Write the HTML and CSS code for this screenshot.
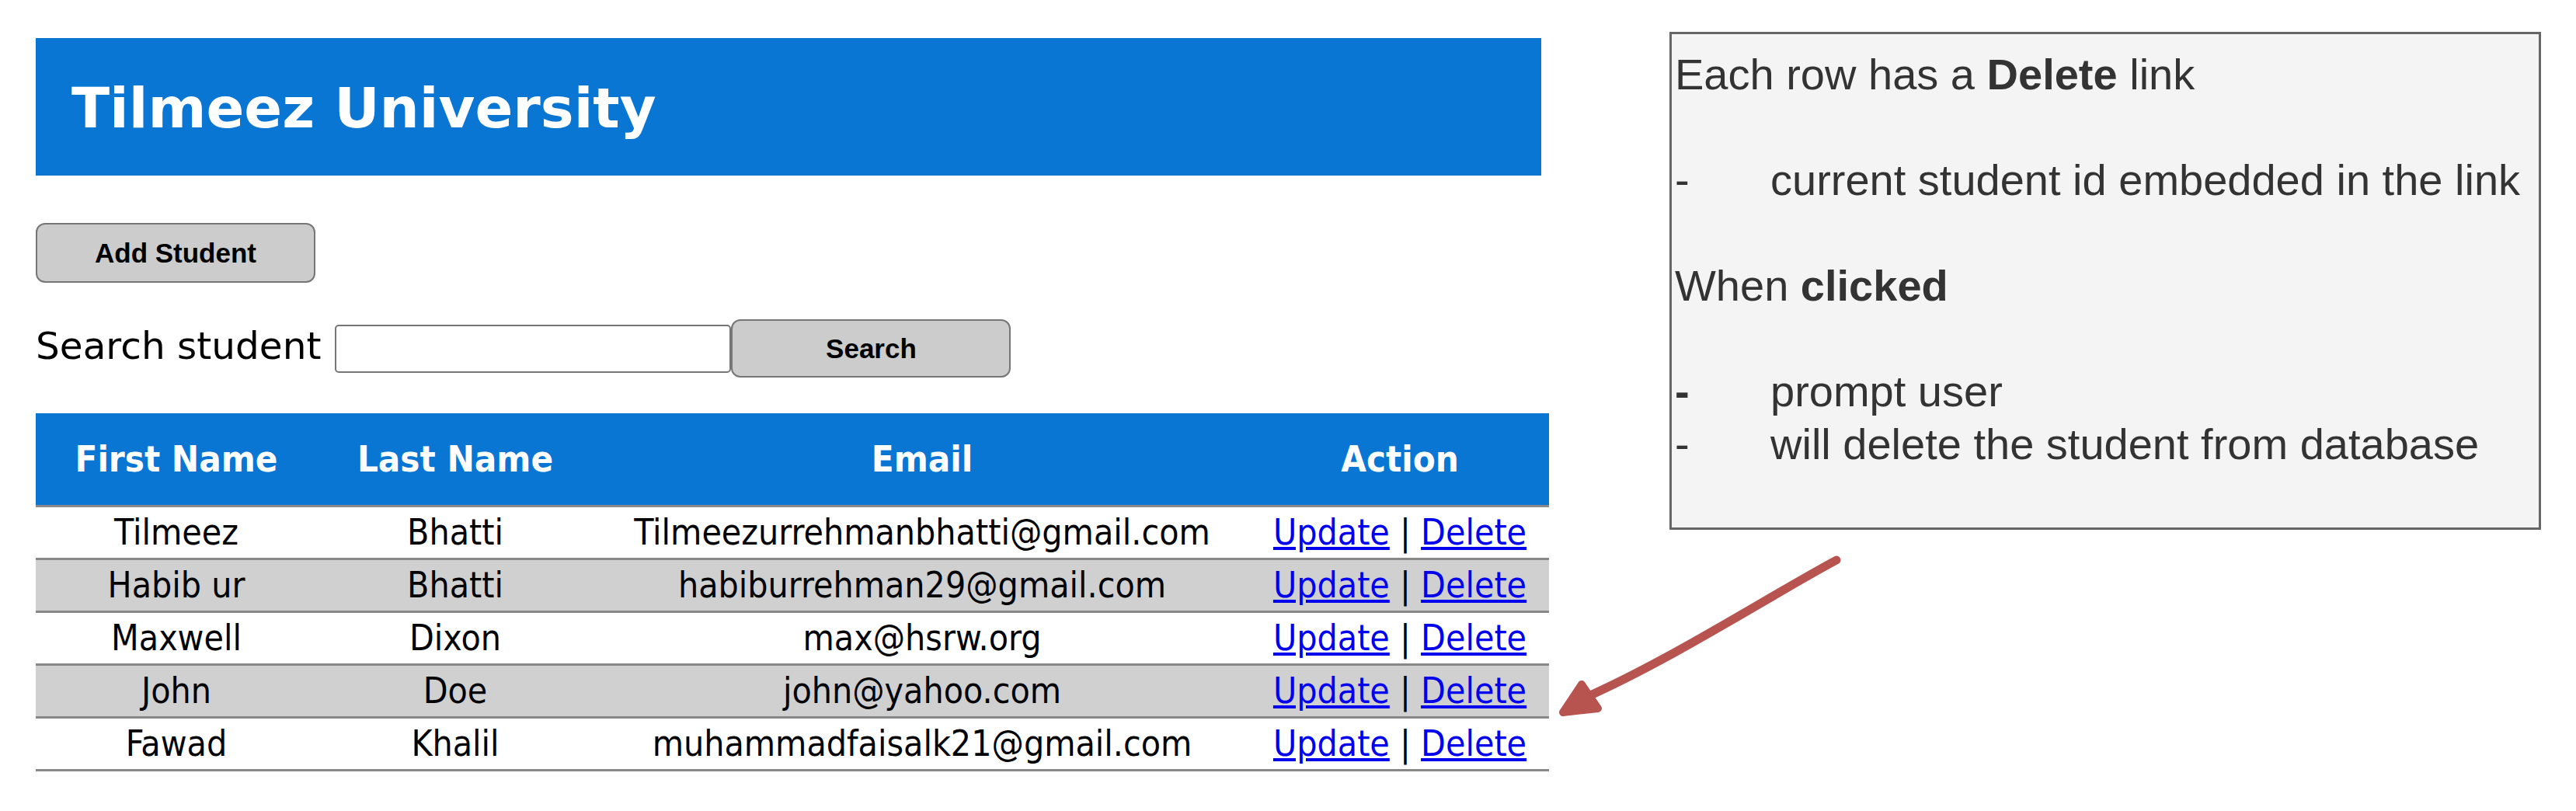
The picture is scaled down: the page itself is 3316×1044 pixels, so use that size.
FILE: index.html
```html
<!DOCTYPE html>
<html lang="en">
<head>
<meta charset="utf-8">
<title>Tilmeez University</title>
<link rel="stylesheet" href="styles.css">
</head>
<body>
<div class="page">
  <main class="main">
    <header class="banner"><h1 class="title">Tilmeez University</h1></header>
    <button class="btn btn-add" type="button">Add Student</button>
    <form class="search-row">
      <label class="search-label" for="q">Search student</label>
      <input class="search-input" id="q" type="text">
      <button class="btn btn-search" type="button">Search</button>
    </form>
    <table class="students">
      <colgroup>
        <col class="c1"><col class="c2"><col class="c3"><col class="c4">
      </colgroup>
      <thead>
        <tr><th>First Name</th><th>Last Name</th><th>Email</th><th>Action</th></tr>
      </thead>
      <tbody>
        <tr><td>Tilmeez</td><td>Bhatti</td><td>Tilmeezurrehmanbhatti@gmail.com</td><td><a href="#">Update</a> | <a href="#">Delete</a></td></tr>
        <tr><td>Habib ur</td><td>Bhatti</td><td>habiburrehman29@gmail.com</td><td><a href="#">Update</a> | <a href="#">Delete</a></td></tr>
        <tr><td>Maxwell</td><td>Dixon</td><td>max@hsrw.org</td><td><a href="#">Update</a> | <a href="#">Delete</a></td></tr>
        <tr><td>John</td><td>Doe</td><td>john@yahoo.com</td><td><a href="#">Update</a> | <a href="#">Delete</a></td></tr>
        <tr><td>Fawad</td><td>Khalil</td><td>muhammadfaisalk21@gmail.com</td><td><a href="#">Update</a> | <a href="#">Delete</a></td></tr>
      </tbody>
    </table>
  </main>
  <aside class="note">
    <p class="line">Each row has a <b>Delete</b> link</p>
    <p class="line blank">&nbsp;</p>
    <p class="line"><span class="dash">-</span>current student id embedded in the link</p>
    <p class="line blank">&nbsp;</p>
    <p class="line">When <b>clicked</b></p>
    <p class="line blank">&nbsp;</p>
    <p class="line"><span class="dash dash-bold">-</span>prompt user</p>
    <p class="line"><span class="dash">-</span>will delete the student from database</p>
  </aside>
</div>
<svg class="arrow" width="3316" height="1044" viewBox="0 0 3316 1044" aria-hidden="true">
  <path d="M2364 721 C2280 766, 2150 850, 2036 900" fill="none" stroke="#b85450" stroke-width="11" stroke-linecap="round"/>
  <polygon points="2036,881 2012,917 2057,912" fill="#b85450" stroke="#b85450" stroke-width="10" stroke-linejoin="round"/>
</svg>
</body>
</html>
```
FILE: styles.css
```css
html, body {
  margin: 0;
  padding: 0;
  background: #ffffff;
}

body {
  position: relative;
  width: 3316px;
  height: 1044px;
  overflow: hidden;
  font-family: "DejaVu Sans", Verdana, sans-serif;
  color: #000;
}

.page {
  display: flex;
  align-items: flex-start;
  padding: 41px 0 0 46px;
}

.main {
  width: 1948px;
  padding-top: 8px;
  display: flex;
  flex-direction: column;
  align-items: flex-start;
}

.banner {
  width: 1938px;
  height: 177px;
  box-sizing: border-box;
  background: #0a76d4;
  display: flex;
  align-items: center;
  padding: 3px 0 0 46px;
}

.title {
  margin: 0;
  font-family: "DejaVu Sans", Verdana, sans-serif;
  font-weight: bold;
  font-size: 72px;
  line-height: 1;
  color: #ffffff;
}

.btn {
  box-sizing: border-box;
  width: 360px;
  background: #cccccc;
  border: 2px solid #767676;
  border-radius: 12px;
  font-family: "Liberation Sans", Arial, sans-serif;
  font-weight: bold;
  font-size: 35px;
  color: #000;
  padding: 0;
}

.btn-add {
  height: 77px;
  margin-top: 61px;
}

.search-row {
  display: flex;
  align-items: center;
  margin: 47px 0 0 0;
}

.search-label {
  font-family: "DejaVu Sans", Verdana, sans-serif;
  font-size: 48.5px;
  margin-bottom: 8px;
  margin-right: 18px;
}

.search-input {
  box-sizing: border-box;
  width: 510px;
  height: 62px;
  border: 2px solid #767676;
  border-radius: 5px;
  background: #fff;
  margin: 0;
  padding: 0 8px;
  font-size: 40px;
}

.btn-search {
  height: 75px;
}

.students {
  margin-top: 46px;
  width: 1948px;
  table-layout: fixed;
  border-collapse: separate;
  border-spacing: 0;
  font-family: "DejaVu Sans Condensed", "DejaVu Sans", sans-serif;
  font-size: 46px;
}

.c1 { width: 362px; }
.c2 { width: 356px; }
.c3 { width: 846px; }
.c4 { width: 384px; }

.students th {
  background: #0a76d4;
  color: #ffffff;
  font-weight: bold;
  font-size: 47px;
  line-height: 118px;
  padding: 0;
  border-bottom: 3px solid #888888;
  text-align: center;
  white-space: nowrap;
}

.students td {
  line-height: 65px;
  padding: 0;
  border-bottom: 3px solid #888888;
  text-align: center;
  white-space: nowrap;
}

.students tbody tr:nth-child(even) td {
  background: #d0d0d0;
}

.students a {
  color: #0000ee;
  text-decoration: underline;
}

.note {
  box-sizing: border-box;
  width: 1122px;
  height: 641px;
  margin-left: 155px;
  background: #f4f4f4;
  border: 3px solid #666666;
  padding: 18px 0 0 4px;
  font-family: "Liberation Sans", Arial, sans-serif;
  font-size: 56px;
  color: #333333;
}

.line {
  margin: 0;
  line-height: 68px;
  white-space: nowrap;
}

.note b {
  font-weight: bold;
}

.dash {
  display: inline-block;
  width: 123px;
}

.dash-bold {
  font-weight: bold;
}

.arrow {
  position: absolute;
  left: 0;
  top: 0;
  pointer-events: none;
}
```
